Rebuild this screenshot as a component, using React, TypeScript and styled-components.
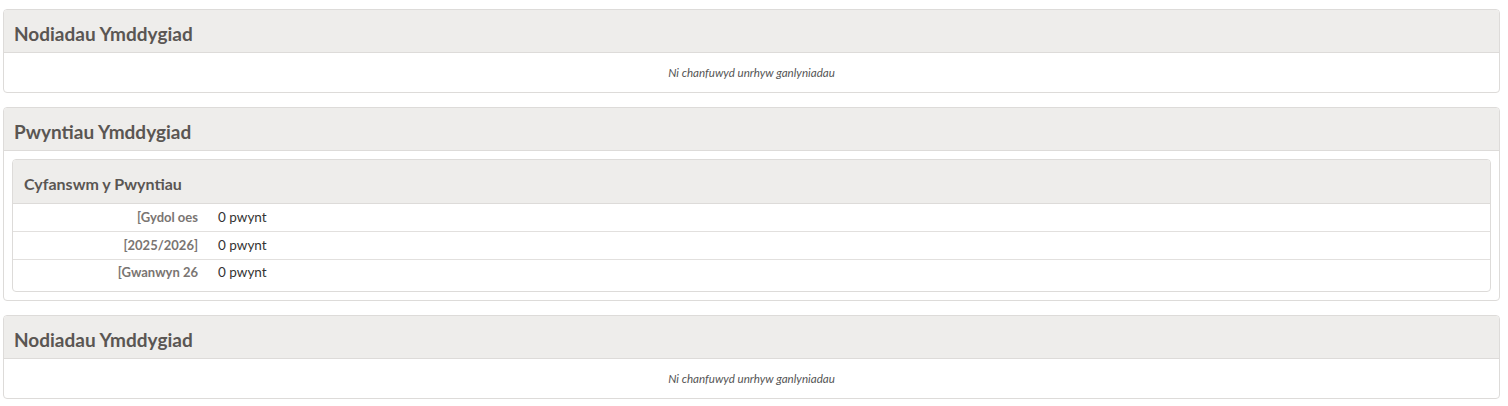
import React from "react";
import styled, { createGlobalStyle } from "styled-components";

const Global = createGlobalStyle`
  html, body { margin: 0; padding: 0; background: #fff; }
  body { font-family: "Lato", "Noto Sans", sans-serif; color: #333; }
`;

const Page = styled.div`
  padding: 9px 8px 0 3px;
  display: flex;
  flex-direction: column;
  gap: 14px;
`;

const Panel = styled.section`
  border: 1px solid #dddbd9;
  border-radius: 4px;
  background: #fff;
  overflow: hidden;
`;

const Header = styled.div<{ $small?: boolean }>`
  background: #eeedeb;
  border-bottom: 1px solid #dddbd9;
  height: ${(p) => (p.$small ? 44 : 43)}px;
  display: flex;
  align-items: center;
  padding-left: ${(p) => (p.$small ? 11 : 10)}px;
  padding-top: 4px;
  box-sizing: border-box;
`;

const Title = styled.h3<{ $small?: boolean }>`
  margin: 0;
  font-size: ${(p) => (p.$small ? 16 : 19)}px;
  font-weight: 700;
  color: #5a5653;
`;

const Empty = styled.div`
  height: 39px;
  display: flex;
  align-items: center;
  justify-content: center;
  font-size: 11.6px;
  font-style: italic;
  color: #555;
`;

const Body = styled.div`
  padding: 8px;
`;

const Row = styled.div<{ $last?: boolean }>`
  display: grid;
  grid-template-columns: 185px 1fr;
  column-gap: 20px;
  height: ${(p) => (p.$last ? 31 : 28)}px;
  align-items: ${(p) => (p.$last ? "start" : "center")};
  border-bottom: ${(p) => (p.$last ? "none" : "1px solid #e2e0de")};
  font-size: 13.5px;
  padding-bottom: ${(p) => (p.$last ? 0 : 1)}px;
  box-sizing: border-box;
`;

const Label = styled.span<{ $last?: boolean }>`
  text-align: right;
  font-weight: 700;
  font-size: 13px;
  color: #7a7572;
  padding-top: ${(p) => (p.$last ? 4 : 0)}px;
`;

const Value = styled.span<{ $last?: boolean }>`
  color: #333;
  padding-top: ${(p) => (p.$last ? 4 : 0)}px;
`;

const rows = [
  ["[Gydol oes", "0 pwynt"],
  ["[2025/2026]", "0 pwynt"],
  ["[Gwanwyn 26", "0 pwynt"],
];

function NotesPanel() {
  return (
    <Panel>
      <Header>
        <Title>Nodiadau Ymddygiad</Title>
      </Header>
      <Empty>Ni chanfuwyd unrhyw ganlyniadau</Empty>
    </Panel>
  );
}

export default function App() {
  return (
    <>
      <Global />
      <Page>
        <NotesPanel />
        <Panel>
          <Header>
            <Title>Pwyntiau Ymddygiad</Title>
          </Header>
          <Body>
            <Panel>
              <Header $small>
                <Title $small>Cyfanswm y Pwyntiau</Title>
              </Header>
              {rows.map(([l, v], i) => {
                const last = i === rows.length - 1;
                return (
                  <Row key={l} $last={last}>
                    <Label $last={last}>{l}</Label>
                    <Value $last={last}>{v}</Value>
                  </Row>
                );
              })}
            </Panel>
          </Body>
        </Panel>
        <NotesPanel />
      </Page>
    </>
  );
}
